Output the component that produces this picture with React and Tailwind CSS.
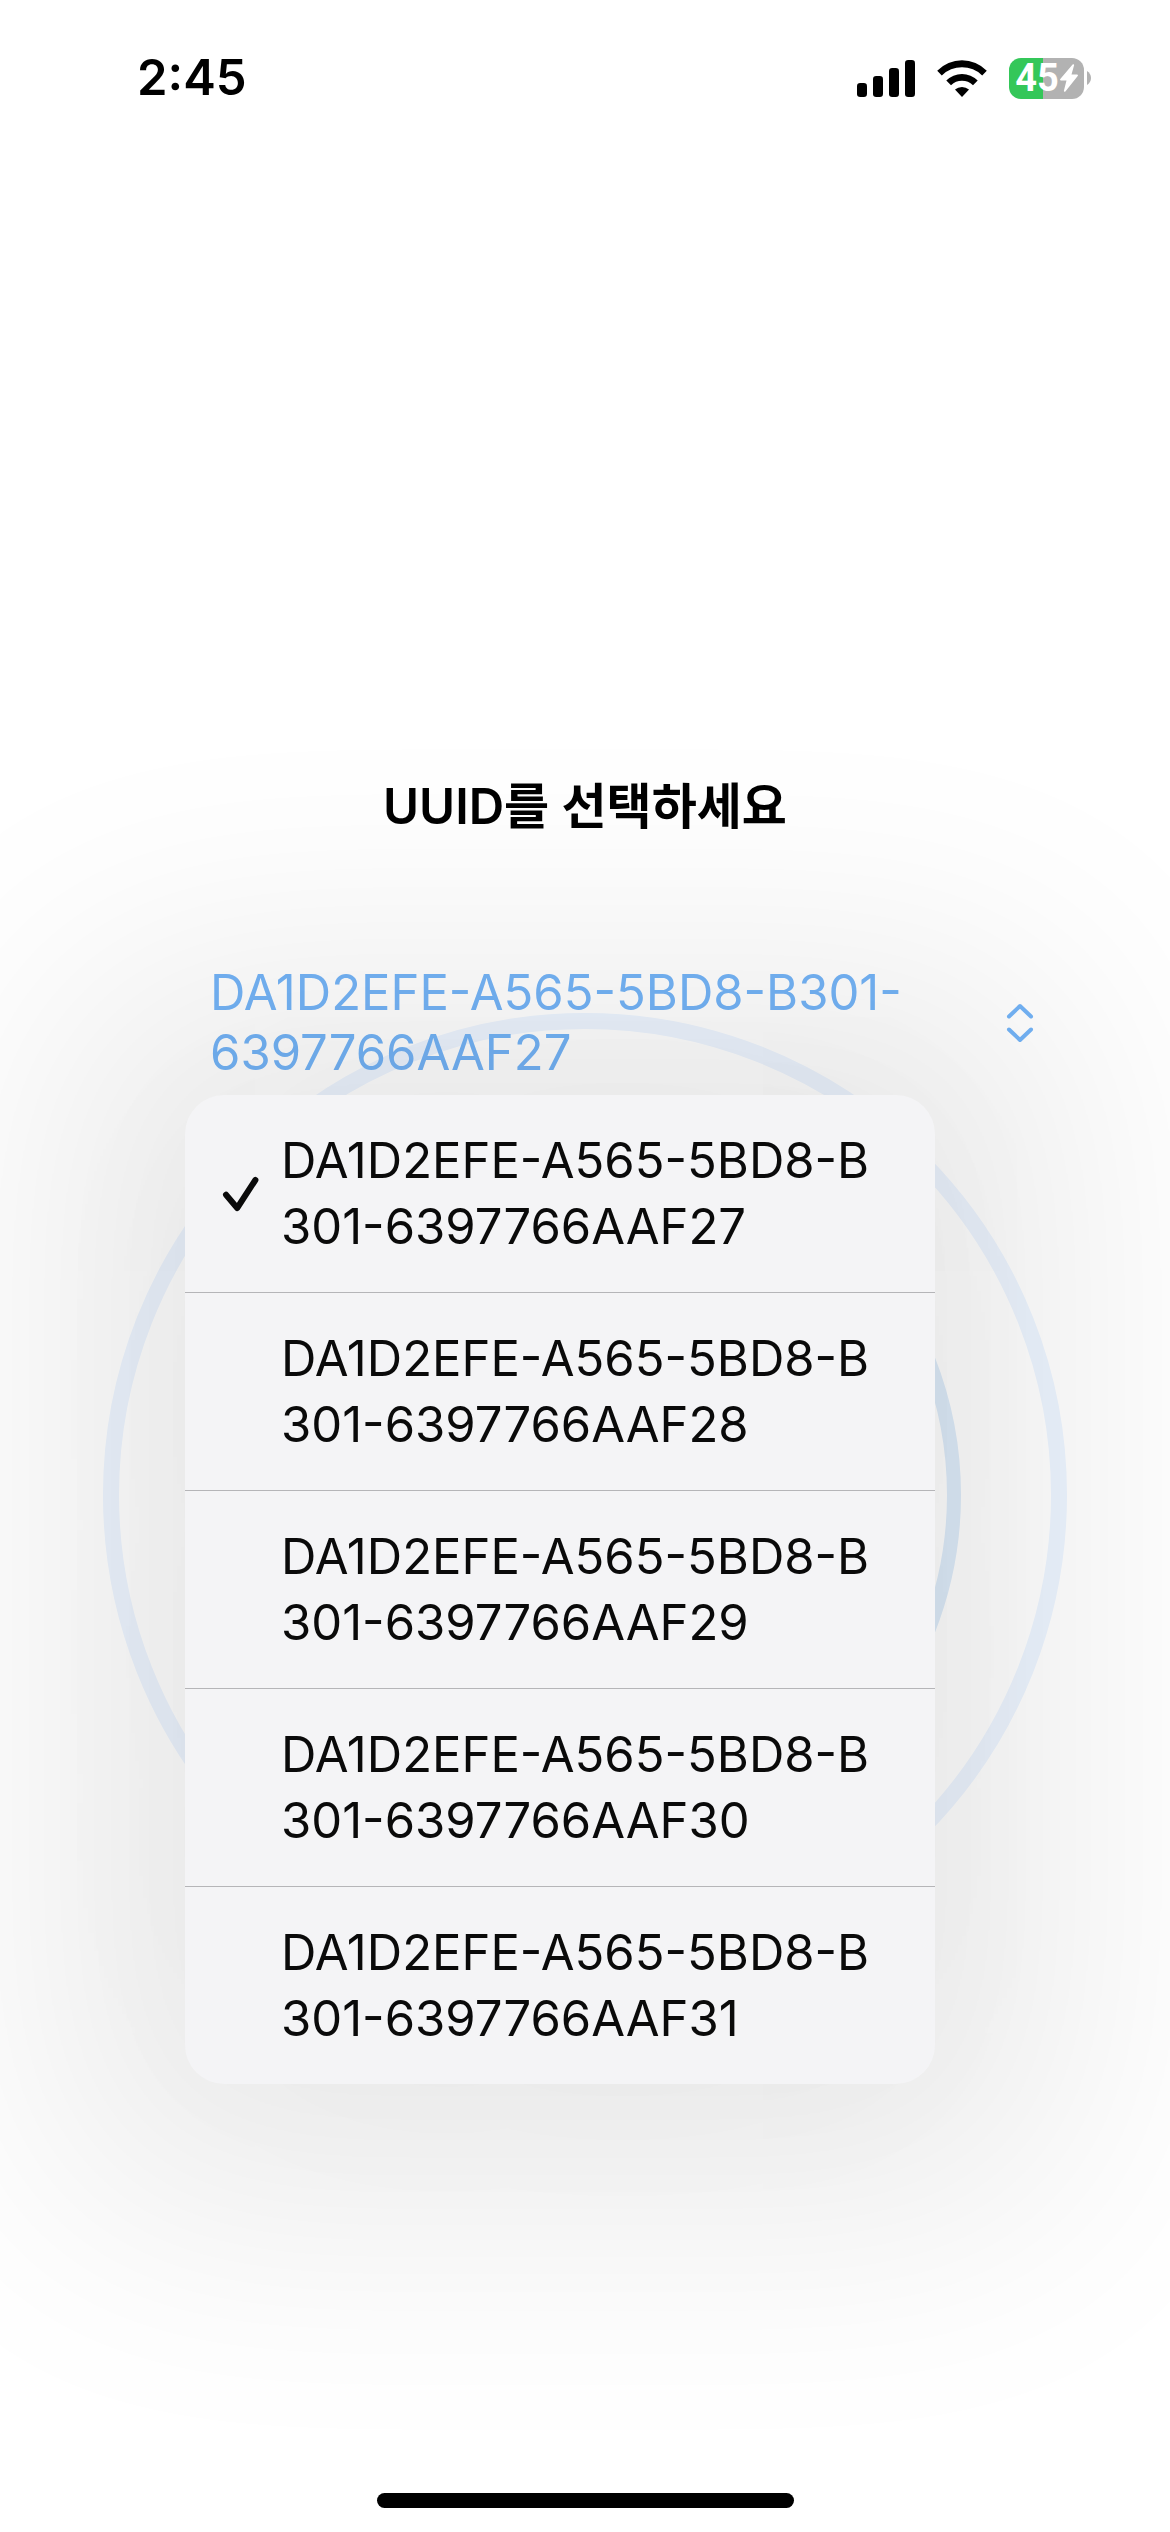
import React, { useState } from "react";

const UUIDS = [
  "DA1D2EFE-A565-5BD8-B301-6397766AAF27",
  "DA1D2EFE-A565-5BD8-B301-6397766AAF28",
  "DA1D2EFE-A565-5BD8-B301-6397766AAF29",
  "DA1D2EFE-A565-5BD8-B301-6397766AAF30",
  "DA1D2EFE-A565-5BD8-B301-6397766AAF31",
];

const SignalIcon = () => (
  <svg width="58" height="37" viewBox="0 0 58 37" fill="currentColor" aria-hidden="true">
    <rect x="0" y="23" width="10" height="14" rx="3.2" />
    <rect x="16" y="16" width="10" height="21" rx="3.2" />
    <rect x="32" y="8" width="10" height="29" rx="3.2" />
    <rect x="48" y="0" width="10" height="37" rx="3.2" />
  </svg>
);

const WifiIcon = () => (
  <svg width="50" height="37" viewBox="0 0 50 37" fill="currentColor" aria-hidden="true">
    <path d="M0.2 10.7A34.6 34.6 0 0 1 49.8 10.7L45.2 15.4A29 29 0 0 0 4.8 15.4Z" />
    <path d="M9.3 20.6A22 22 0 0 1 40.7 20.6L36 25.2A16 16 0 0 0 14 25.2Z" />
    <path d="M18 29.6A10.5 10.5 0 0 1 32 29.6L25 37Z" />
  </svg>
);

const BatteryIcon = () => (
  <div className="flex items-center gap-[3px]">
    <div className="flex h-[41px] w-[75px] items-center justify-center gap-px rounded-[12px] bg-[linear-gradient(to_right,#34c759_45%,#b2b2b2_45%)] text-white">
      <span className="font-['Roboto',sans-serif] text-[38px] leading-none font-bold">45</span>
      <svg width="18" height="28" viewBox="0 0 18 28" fill="currentColor" aria-hidden="true">
        <path d="M12.6 0.6C13.3 -0.2 14.4 0.2 14.1 1.3L11.5 10.6H17C17.9 10.6 18.2 11.4 17.7 12.1L5.4 27.4C4.7 28.2 3.6 27.8 3.9 26.7L6.5 16.6H1C0.1 16.6 -0.2 15.8 0.3 15.1Z" />
      </svg>
    </div>
    <svg width="4" height="14" viewBox="0 0 4 14" fill="#b2b2b2" aria-hidden="true">
      <path d="M0 0C2.4 1.4 4 4 4 7S2.4 12.6 0 14Z" />
    </svg>
  </div>
);

const StatusBar = () => (
  <header className="flex h-[60px] items-center justify-between pr-[79px] pl-[137px]">
    <time className="text-[49px] leading-[60px] font-semibold">2:45</time>
    <div className="flex items-center gap-[22px]">
      <SignalIcon />
      <WifiIcon />
      <BatteryIcon />
    </div>
  </header>
);

// Concentric rings behind the picker
const Rings = () => (
  <svg
    className="pointer-events-none absolute top-[1013px] left-1/2 -translate-x-1/2"
    width="964"
    height="964"
    viewBox="0 0 964 964"
    fill="none"
    aria-hidden="true"
  >
    <circle cx="482" cy="482" r="474" stroke="#edf5ff" strokeWidth="16" />
    <circle cx="482" cy="482" r="369" stroke="#deecfa" strokeWidth="14" />
  </svg>
);

const App = () => {
  const [selected, setSelected] = useState(UUIDS[0]);
  const [isOpen, setIsOpen] = useState(true);

  const handleSelect = (uuid) => {
    setSelected(uuid);
    setIsOpen(false);
  };

  return (
    <div className="relative flex min-h-screen flex-col overflow-hidden bg-white pt-12 pb-6 font-['Inter','Noto_Sans_CJK_KR',sans-serif] text-black">
      <Rings />
      <StatusBar />

      <main className="relative px-[136px] pt-[669px]">
        <h1 className="text-center text-[49px] leading-[60px] font-semibold">UUID를 선택하세요</h1>

        <div className="relative mt-[126px]">
          <button
            type="button"
            aria-haspopup="menu"
            aria-expanded={isOpen}
            onClick={() => setIsOpen(!isOpen)}
            className="flex w-full items-center justify-between pl-[74px] text-left text-[49px] leading-[60px] text-[#74b4f7]"
          >
            <span className="max-w-[730px]">{selected}</span>
            <svg
              width="28"
              height="40"
              viewBox="0 0 28 40"
              fill="none"
              stroke="currentColor"
              strokeWidth="4"
              strokeLinecap="round"
              strokeLinejoin="round"
              aria-hidden="true"
            >
              <path d="M3 13.5L14 3L25 13.5" />
              <path d="M3 26.5L14 37L25 26.5" />
            </svg>
          </button>

          {isOpen && (
            <ul
              role="menu"
              className="absolute top-full left-[49px] mt-3 w-[750px] divide-y divide-[#b5b5b8] rounded-[39px] bg-[#f4f4f6] shadow-[0_0_260px_140px_rgba(0,0,0,0.08),0_0_240px_-70px_rgba(0,0,0,0.09)]"
            >
              {UUIDS.map((uuid) => (
                <li key={uuid} role="none">
                  <button
                    type="button"
                    role="menuitemradio"
                    aria-checked={uuid === selected}
                    onClick={() => handleSelect(uuid)}
                    className="flex h-[197px] w-full items-center gap-[22px] pr-10 pl-[37px] text-left text-[49px] leading-[66px] text-[#0a0a0a]"
                  >
                    <span className="w-[37px] shrink-0">
                      {uuid === selected && (
                        <svg
                          width="37"
                          height="36"
                          viewBox="0 0 37 36"
                          fill="none"
                          stroke="currentColor"
                          strokeWidth="6"
                          strokeLinecap="round"
                          strokeLinejoin="round"
                          aria-hidden="true"
                        >
                          <path d="M4 18.7L15.2 32L33.4 4" />
                        </svg>
                      )}
                    </span>
                    <span className="break-all">{uuid}</span>
                  </button>
                </li>
              ))}
            </ul>
          )}
        </div>
      </main>

      {/* Home indicator */}
      <div className="relative mx-auto mt-auto h-[15px] w-[417px] rounded-full bg-black" />
    </div>
  );
};

export default App;
